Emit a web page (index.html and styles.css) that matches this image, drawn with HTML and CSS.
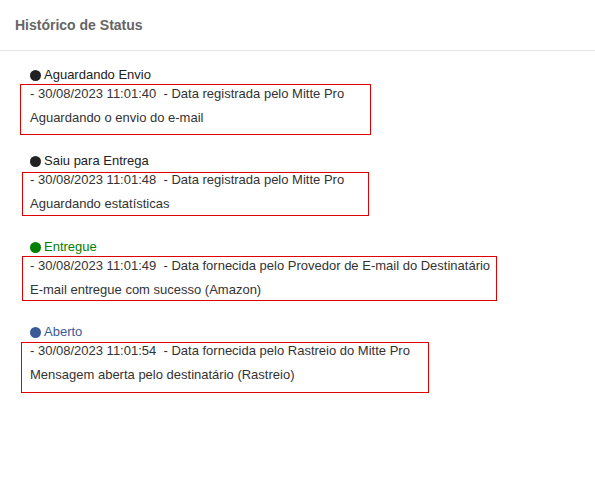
FILE: index.html
```html
<!DOCTYPE html>
<html lang="pt-BR">
<head>
  <meta charset="UTF-8" />
  <title>Histórico de Status</title>
  <link rel="stylesheet" href="styles.css">
</head>
<body>

<header class="panel-header">
  <h3>Histórico de Status</h3>
</header>

<div class="status-list">

  <div class="status-item">
    <div class="status-label"><span class="dot"></span>Aguardando Envio</div>
    <div class="status-line">- 30/08/2023 11:01:40&nbsp; - Data registrada pelo Mitte Pro</div>
    <div class="status-line status-desc">Aguardando o envio do e-mail</div>
    <div class="mark mark-1"></div>
  </div>

  <div class="status-item">
    <div class="status-label"><span class="dot"></span>Saiu para Entrega</div>
    <div class="status-line">- 30/08/2023 11:01:48&nbsp; - Data registrada pelo Mitte Pro</div>
    <div class="status-line status-desc">Aguardando estatísticas</div>
    <div class="mark mark-2"></div>
  </div>

  <div class="status-item">
    <div class="status-label green"><span class="dot"></span>Entregue</div>
    <div class="status-line">- 30/08/2023 11:01:49&nbsp; - Data fornecida pelo Provedor de E-mail do Destinatário</div>
    <div class="status-line status-desc">E-mail entregue com sucesso (Amazon)</div>
    <div class="mark mark-3"></div>
  </div>

  <div class="status-item">
    <div class="status-label blue"><span class="dot"></span>Aberto</div>
    <div class="status-line">- 30/08/2023 11:01:54&nbsp; - Data fornecida pelo Rastreio do Mitte Pro</div>
    <div class="status-line status-desc">Mensagem aberta pelo destinatário (Rastreio)</div>
    <div class="mark mark-4"></div>
  </div>

</div>

</body>
</html>
```

FILE: styles.css
```css
body {
  margin: 0;
  padding: 0;
  background-color: #fff;
  color: #333;
  font-family: 'Liberation Sans', Arial, sans-serif;
  font-size: 13px;
}

.panel-header {
  height: 50px;
  border-bottom: 1px solid #e5e5e5;
  padding: 0 15px;
  display: flex;
  align-items: center;
}

.panel-header h3 {
  margin: 0;
  font-size: 14px;
  font-weight: bold;
  color: #666;
}

.status-list {
  padding: 15px 0 0 30px;
}

.status-item {
  position: relative;
  height: 86px;
}

.status-item:nth-child(3) {
  height: 85px;
}

.status-label {
  height: 18px;
  line-height: 18px;
  color: #222;
  display: flex;
  align-items: center;
}

.dot {
  display: inline-block;
  width: 11px;
  height: 11px;
  border-radius: 50%;
  background-color: currentColor;
  margin-right: 3px;
}

.status-label.green {
  color: #008000;
}

.status-label.blue {
  color: #3b5998;
}

.status-line {
  line-height: 20px;
}

.status-desc {
  margin-top: 4px;
}

/* red highlight frames drawn over each entry */
.mark {
  position: absolute;
  border: 1px solid #e00000;
  box-sizing: border-box;
}

.mark-1 { top: 18px; left: -10px; width: 351px; height: 51px; }
.mark-2 { top: 20px; left: -8px;  width: 347px; height: 44px; }
.mark-3 { top: 18px; left: -8px;  width: 475px; height: 45px; }
.mark-4 { top: 19px; left: -9px;  width: 408px; height: 51px; }
```
